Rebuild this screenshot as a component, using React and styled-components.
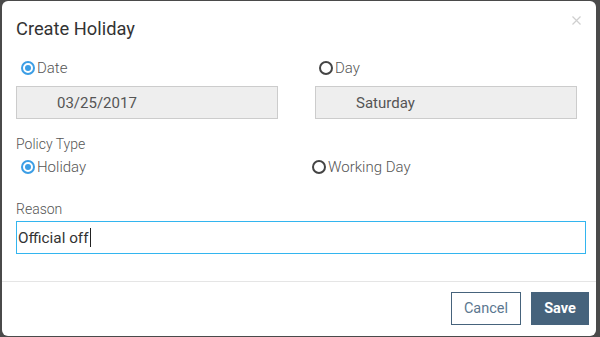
import React from "react";
import styled, { createGlobalStyle } from "styled-components";

const Global = createGlobalStyle`
  html, body { margin: 0; padding: 0; background: #4a4a4a; }
  body { font-family: Roboto, "Liberation Sans", Arial, sans-serif; }
  #root { width: 600px; height: 337px; }
`;

const Overlay = styled.div`
  width: 600px;
  height: 337px;
  box-sizing: border-box;
  padding: 1px 4px 1px 2px;
  background: #4a4a4a;
`;

const Modal = styled.div`
  position: relative;
  height: 335px;
  background: #fff;
  border-radius: 6px;
  display: flex;
  flex-direction: column;
`;

const Header = styled.div`
  padding: 16px 14px 0 14px;
`;

const Title = styled.h4`
  margin: 0;
  font-size: 18.3px;
  line-height: 24px;
  font-weight: 400;
  color: #333;
`;

const Close = styled.button`
  position: absolute;
  top: 14px;
  right: 15px;
  width: 10px;
  height: 10px;
  padding: 0;
  border: 0;
  background: none;
  display: flex;
  align-items: center;
  justify-content: center;
`;

const Body = styled.div`
  padding: 0 10px 26px 14px;
  flex: 1;
`;

const Grid = styled.div`
  display: grid;
  grid-template-columns: ${p => p.$cols};
  column-gap: ${p => p.$gap};
  margin-top: ${p => p.$mt || 0}px;
`;

const Col = styled.div`
  display: flex;
  flex-direction: column;
`;

const RadioRow = styled.label`
  display: flex;
  align-items: center;
  height: 20px;
  margin-left: ${p => p.$ml || 0}px;
  font-size: 15px;
  font-weight: 300;
  color: #555;
  gap: 2px;
`;

const RadioCircle = styled.span`
  box-sizing: border-box;
  width: 14px;
  height: 14px;
  border-radius: 50%;
  border: 2px solid ${p => (p.$on ? "#3c9ee5" : "#444")};
  display: flex;
  align-items: center;
  justify-content: center;
  &::after {
    content: "";
    display: ${p => (p.$on ? "block" : "none")};
    width: 6px;
    height: 6px;
    border-radius: 50%;
    background: #3c9ee5;
  }
`;

const ReadInput = styled.div`
  box-sizing: border-box;
  margin-top: 8px;
  height: 33px;
  background: #eeeeee;
  border: 1px solid #cccccc;
  padding-left: 40px;
  display: flex;
  align-items: center;
  font-size: 15px;
  color: #555;
`;

const Label = styled.div`
  margin-top: ${p => p.$mt}px;
  font-size: 14px;
  font-weight: 300;
  line-height: 18px;
  color: #555;
`;

const TextInput = styled.div`
  box-sizing: border-box;
  margin-top: 3px;
  height: 33px;
  border: 1px solid #33b5ef;
  padding-left: 1px;
  display: flex;
  align-items: center;
  font-size: 15.3px;
  color: #333;
`;

const Caret = styled.span`
  display: inline-block;
  width: 1px;
  height: 19px;
  background: #222;
  margin-left: 1px;
`;

const Footer = styled.div`
  border-top: 1px solid #e5e5e5;
  padding: 10px 7px 11px 0;
  display: flex;
  justify-content: flex-end;
  gap: 10px;
`;

const Button = styled.button`
  box-sizing: border-box;
  height: 33px;
  width: ${p => p.$w}px;
  font-family: inherit;
  font-size: 14.5px;
  font-weight: ${p => (p.$primary ? 700 : 400)};
  border: 1px solid #46637c;
  background: ${p => (p.$primary ? "#46637c" : "#fff")};
  color: ${p => (p.$primary ? "#fff" : "#5b7790")};
  padding: 0;
`;

function Radio({ on, children, ml }) {
  return (
    <RadioRow $ml={ml}>
      <RadioCircle $on={on} />
      {children}
    </RadioRow>
  );
}

export default function App() {
  return (
    <>
      <Global />
      <Overlay>
        <Modal>
          <Header>
            <Title>Create Holiday</Title>
          </Header>
          <Close aria-label="close">
            <svg width="9" height="9" viewBox="0 0 9 9">
              <path d="M0.5 0.5 L8.5 8.5 M8.5 0.5 L0.5 8.5" stroke="#cfcfcf" strokeWidth="1.2" />
            </svg>
          </Close>
          <Body>
            <Grid $cols="262px 262px" $gap="37px" $mt={17}>
              <Col>
                <Radio on ml={5}>Date</Radio>
                <ReadInput>03/25/2017</ReadInput>
              </Col>
              <Col>
                <Radio ml={4}>Day</Radio>
                <ReadInput>Saturday</ReadInput>
              </Col>
            </Grid>
            <Label $mt={16}>Policy Type</Label>
            <Grid $cols="296px 200px" $gap="0px" $mt={4}>
              <Radio on ml={5}>Holiday</Radio>
              <Radio>Working Day</Radio>
            </Grid>
            <Label $mt={23}>Reason</Label>
            <TextInput>
              Official off<Caret />
            </TextInput>
          </Body>
          <Footer>
            <Button $w={70}>Cancel</Button>
            <Button $primary $w={58}>Save</Button>
          </Footer>
        </Modal>
      </Overlay>
    </>
  );
}
